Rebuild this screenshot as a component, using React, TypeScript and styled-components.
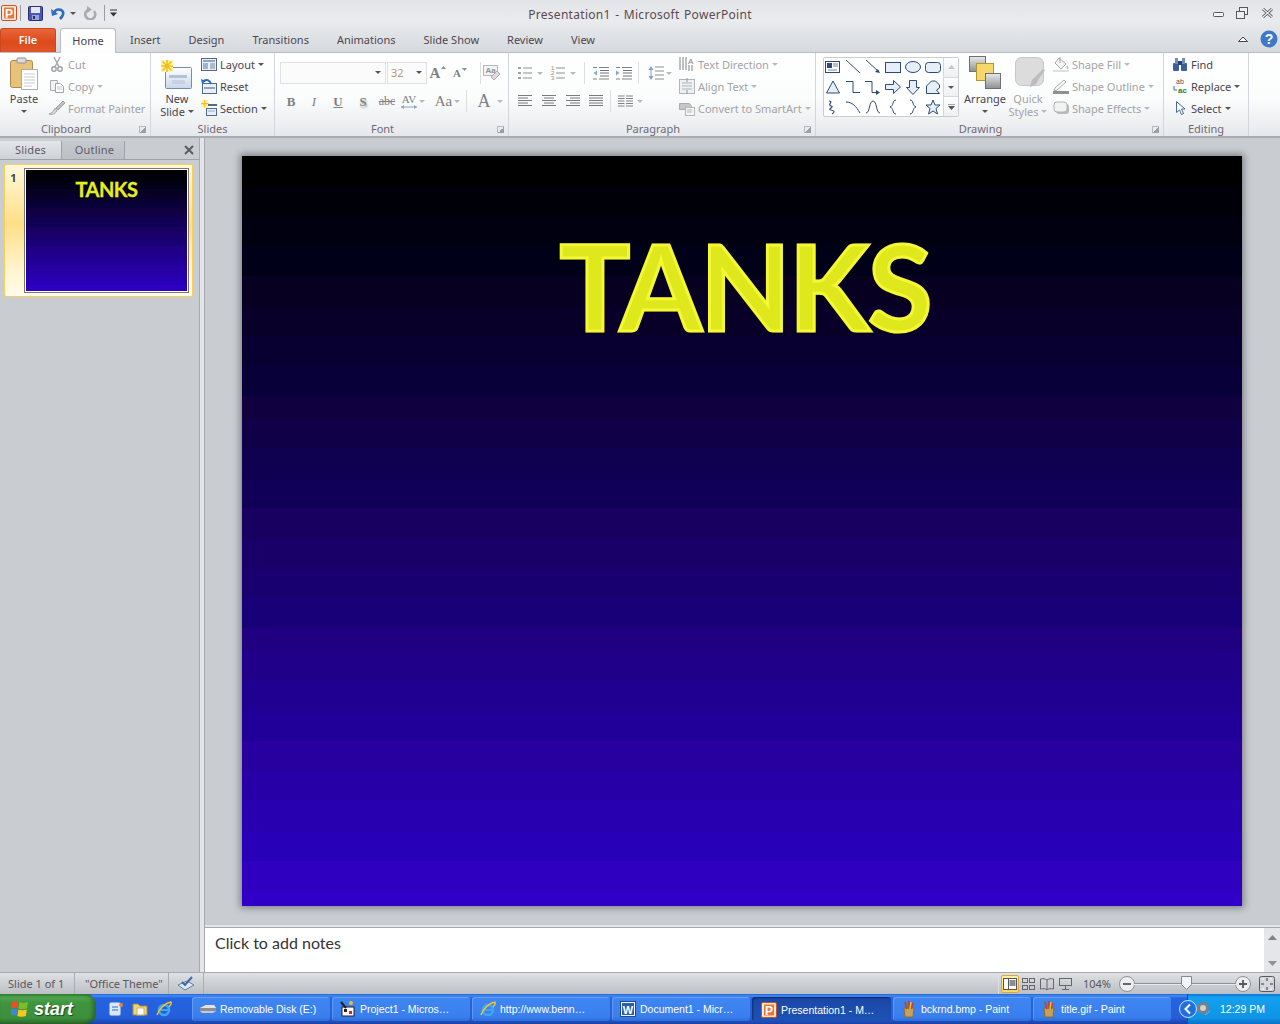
import React from "react";
import styled, { createGlobalStyle } from "styled-components";

const banded = (() => {
  const stops: string[] = [];
  const n = 100;
  for (let i = 0; i < n; i++) {
    const t = i / (n - 1);
    const r = Math.floor((51 * t) / 8) * 8;
    const b = Math.floor((204 * t) / 8) * 8;
    stops.push(`rgb(${r},0,${b}) ${i}% ${i + 1}%`);
  }
  return `linear-gradient(${stops.join(",")})`;
})();

const Global = createGlobalStyle`
  html, body { margin: 0; padding: 0; width: 1280px; height: 1024px; overflow: hidden; }
  body { font-family: "Noto Sans", "Liberation Sans", sans-serif; font-size: 11px; color: #3b3b3b; }
  svg { display: block; flex: none; }
`;

const Page = styled.div`display:flex;flex-direction:column;width:1280px;height:1024px;overflow:hidden;`;
const Chrome = styled.div`background:linear-gradient(#e2e4e8,#e9ebee 40%,#d6d9dd);`;
const TitleBar = styled.div`height:26px;display:grid;grid-template-columns:1fr auto 1fr;align-items:center;`;
const Qat = styled.div`display:flex;align-items:center;padding-left:1px;`;
const QatDivider = styled.i`width:1px;height:16px;background:#9a9da2;margin:0 ${p => p.$m ?? 7}px 0 ${p => p.$l ?? 3}px;`;
const QatGap = styled.span`width:${p => p.$w}px;flex:none;`;
const Title = styled.div`font-size:12px;color:#5b4a4f;letter-spacing:.3px;word-spacing:1px;padding-top:2px;white-space:pre;`;
const WinBtns = styled.div`display:flex;justify-content:flex-end;align-items:center;gap:10px;padding-right:5px;`;
const WinClose = styled.span`margin-left:2px;`;
const TabBar = styled.div`height:26px;display:flex;align-items:flex-end;padding-top:2px;box-sizing:border-box;`;
const FileTab = styled.div`width:56px;height:24px;padding-bottom:2px;background:linear-gradient(#e8663a,#dd4a1c 55%,#e0552a);border:1px solid #c9481e;border-bottom:0;border-radius:3px 3px 0 0;box-sizing:border-box;color:#fff;font-size:11px;font-weight:600;display:flex;align-items:center;justify-content:center;margin-right:4px;`;
const HomeTab = styled.div`width:56px;height:25px;padding-bottom:2px;background:linear-gradient(#fff,#fdfdfe);border:1px solid #b9bcc1;border-bottom:0;border-radius:3px 3px 0 0;box-sizing:border-box;display:flex;align-items:center;justify-content:center;font-size:11px;color:#4a3f4a;margin-bottom:-1px;position:relative;z-index:1;`;
const Tab = styled.div`height:24px;padding:0 14px 2px;box-sizing:border-box;display:flex;align-items:center;font-size:11px;color:#4e4650;`;
const TabEnd = styled.div`margin-left:auto;display:flex;align-items:center;gap:11px;padding:0 2px 3px 0;height:24px;box-sizing:border-box;`;

const Ribbon = styled.div`height:86px;display:flex;background:linear-gradient(#fff,#fbfcfc 55%,#e6e8ec);border-top:1px solid #b9bcc1;border-bottom:2px solid #a8abb0;box-sizing:border-box;`;
const Group = styled.div`width:${p => p.$w}px;display:flex;flex-direction:column;border-right:1px solid #d3d6da;box-sizing:border-box;flex:none;`;
const GroupBody = styled.div`height:68px;display:flex;padding:0 0 0 ${p => p.$pad ?? 0}px;box-sizing:border-box;`;
const GroupLabel = styled.div`height:16px;position:relative;display:flex;align-items:center;justify-content:center;padding-right:${p => p.$lau ? 18 : 0}px;box-sizing:border-box;font-size:11px;color:#6f6a78;`;
const Launcher = styled.span`position:absolute;right:4px;bottom:3px;width:7px;height:7px;border-left:1px solid #b5b8bc;border-top:1px solid #b5b8bc;box-sizing:border-box;background:linear-gradient(135deg,transparent 50%,#9ca0a5 50%);`;
const Big = styled.div`width:${p => p.$w ?? 42}px;margin-left:${p => p.$ml ?? 0}px;flex:none;display:flex;flex-direction:column;align-items:center;font-size:11px;line-height:13px;color:${p => p.$off ? "#a3a3a6" : "#4b4450"};`;
const BigIcon = styled.div`height:39px;display:flex;align-items:flex-start;justify-content:center;padding-top:${p => (p.$top ?? 2) + 1}px;box-sizing:border-box;`;
const Line = styled.div`height:13px;display:flex;align-items:center;gap:3px;white-space:nowrap;`;
const Caret = styled.i`display:inline-block;flex:none;width:0;height:0;border:3px solid transparent;border-top:3px solid ${p => p.$off ? "#b9b9bc" : "#55555b"};border-bottom:0;`;
const Stack = styled.div`display:flex;flex-direction:column;margin-left:${p => p.$ml ?? 0}px;flex:none;`;
const Small = styled.div`height:22px;display:flex;align-items:center;gap:3px;white-space:nowrap;font-size:11px;color:${p => p.$off ? "#a3a3a6" : "#4b4450"};`;
const Rows = styled.div`display:flex;flex-direction:column;gap:6px;padding-top:9px;width:${p => p.$w ?? 230}px;padding-left:${p => p.$pad ?? 4}px;box-sizing:border-box;flex:none;`;
const Row = styled.div`display:flex;height:22px;align-items:center;`;
const Combo = styled.div`width:${p => p.$w}px;height:22px;margin-right:${p => p.$mr ?? 0}px;border:1px solid #dfe1e4;background:#fbfbfc;box-sizing:border-box;display:flex;align-items:center;justify-content:space-between;padding:0 4px 2px 3px;color:#b59a70;font-size:11px;`;
const Tool = styled.div`width:${p => p.$w}px;margin-left:${p => p.$ml ?? 0}px;height:22px;flex:none;display:flex;align-items:center;justify-content:center;gap:${p => p.$gap ?? 4}px;`;
const Sep = styled.i`width:1px;height:22px;flex:none;background:#dcdee1;margin-left:${p => p.$ml}px;`;
const Glyph = styled.span`font-family:${p => p.$serif ? '"Liberation Serif",serif' : '"Liberation Sans",sans-serif'};font-size:${p => p.$size ?? 13}px;font-weight:${p => p.$bold ? 700 : 400};font-style:${p => p.$it ? "italic" : "normal"};text-decoration:${p => p.$under ? "underline" : p.$strike ? "line-through" : "none"};color:#808084;line-height:1;`;
const GrowMark = styled.span`display:flex;align-items:flex-start;gap:1px;`;
const AvMark = styled.span`display:flex;flex-direction:column;align-items:center;`;
const Gallery = styled.div`width:136px;height:60px;margin-top:4px;border:1px solid #c9ccd0;background:#fff;box-sizing:border-box;display:flex;border-radius:2px;`;
const ShapeGrid = styled.div`display:grid;grid-template-columns:repeat(6,20px);grid-template-rows:repeat(3,20px);width:120px;place-items:center;margin:-1px 0 0 -1px;`;
const GalleryBar = styled.div`margin-left:auto;width:14px;display:flex;flex-direction:column;border-left:1px solid #d5d7da;`;
const GalleryCell = styled.div`flex:1;display:flex;align-items:center;justify-content:center;border-bottom:1px solid #d5d7da;background:linear-gradient(#fdfdfd,#eef0f2);&:last-child{border-bottom:0;}`;

const Work = styled.div`height:834px;display:flex;background:#c9cdd2;`;
const Pane = styled.div`width:200px;padding-top:3px;box-sizing:border-box;flex:none;border-right:1px solid #a6a9ae;`;
const PaneTabs = styled.div`height:18px;display:flex;border-bottom:1px solid #9fa3a8;align-items:flex-end;position:relative;box-sizing:content-box;`;
const PaneTab = styled.div`width:${p => p.$w}px;height:18px;padding:0 0 2px ${p => p.$in ?? 0}px;display:flex;align-items:center;justify-content:center;font-size:11px;color:#5e5a68;box-sizing:border-box;background:${p => p.$on ? "linear-gradient(#e4e6e9,#ced2d6)" : "linear-gradient(#c5c9ce,#bcc0c5)"};border-right:1px solid #9fa3a8;letter-spacing:.2px;`;
const PaneClose = styled.div`position:absolute;right:5px;top:4px;`;
const Thumb = styled.div`margin:4px 6px 0 4px;height:133px;box-sizing:border-box;border:1px solid #f6cf5e;border-radius:2px;background:linear-gradient(#fff8dc,#fedf87 45%,#fff7d8 85%,#fffbe8);display:flex;padding:3px 3px 3px 0;`;
const ThumbNum = styled.div`width:19px;text-align:center;font-weight:700;font-size:11px;color:#444;padding-top:2px;padding-right:2px;box-sizing:border-box;flex:none;`;
const ThumbSlide = styled.div`flex:1;border:1px solid #777;outline:1px solid #fff;outline-offset:-2px;background:${banded};display:flex;justify-content:center;padding-top:10px;box-sizing:border-box;`;
const ThumbText = styled.div`font-family:Lato,sans-serif;font-weight:700;font-size:20px;line-height:21px;height:21px;color:#e6ee1e;letter-spacing:-.5px;-webkit-text-stroke:.3px #e6ee1e;`;
const Splitter = styled.div`width:4px;background:#e3e5e8;flex:none;border-right:1px solid #a6a9ae;`;
const Right = styled.div`flex:1;display:flex;flex-direction:column;min-width:0;`;
const Stage = styled.div`height:787px;padding:18px 0 0 37px;box-sizing:border-box;`;
const Slide = styled.div`width:1000px;height:750px;background:${banded};box-shadow:0 0 7px 2px rgba(0,0,0,.38);display:flex;justify-content:center;padding-top:55px;box-sizing:border-box;`;
const Headline = styled.div`font-family:Lato,sans-serif;font-weight:700;font-size:118px;line-height:150px;height:150px;letter-spacing:-2px;margin-left:6px;color:#dfe81c;-webkit-text-stroke:3px #f4f832;text-shadow:1px 1px 0 #aeb410,0 0 2px #fbff60;`;
const NotesRow = styled.div`height:47px;display:flex;border-top:2px solid #e3e5e8;box-sizing:border-box;`;
const Notes = styled.div`flex:1;background:#fff;border-top:1px solid #a6a9ae;padding:3px 0 0 10px;font-family:Lato,sans-serif;font-size:16px;line-height:24px;color:#333;font-weight:400;`;
const NotesBar = styled.div`width:16px;background:#e4e6e9;display:flex;flex-direction:column;align-items:center;justify-content:space-between;padding:7px 0 6px;box-sizing:border-box;border-top:1px solid #a6a9ae;`;

const Status = styled.div`height:22px;display:flex;align-items:center;background:linear-gradient(#dfe1e4,#c9ccd0 60%,#bcbfc3);border-top:1px solid #a6a9ae;box-sizing:border-box;color:#5a5560;font-size:11px;`;
const StatusCell = styled.div`height:100%;display:flex;align-items:center;padding:0 ${p => p.$pad ?? 8}px;border-right:1px solid #a9acb0;white-space:nowrap;width:${p => p.$w}px;box-sizing:border-box;`;
const StatusRight = styled.div`margin-left:auto;display:flex;align-items:center;height:100%;`;
const ViewBtn = styled.div`width:18px;height:18px;margin-left:${p => p.$ml ?? 0}px;display:flex;align-items:center;justify-content:center;box-sizing:border-box;border-radius:2px;${p => p.$on ? "background:linear-gradient(#fff0a8,#ffd65c);border:1px solid #d9a93a;" : ""}`;
const Percent = styled.div`width:44px;text-align:center;margin-left:1px;color:#5a5560;`;
const Track = styled.div`width:102px;height:1px;background:#8d9095;box-shadow:0 1px 0 #e8e9eb;position:relative;margin:0 -1px;`;
const SliderThumb = styled.div`position:absolute;left:47px;top:-7px;`;
const StatusGap = styled.span`width:${p => p.$w}px;flex:none;`;

const Taskbar = styled.div`height:30px;display:flex;align-items:center;background:linear-gradient(#1f5fd8 0,#3f8cf3 6%,#2663e0 14%,#245edb 80%,#1941a5);color:#fff;font-family:"Liberation Sans","Noto Sans",sans-serif;`;
const Start = styled.div`width:96px;height:30px;flex:none;box-sizing:border-box;background:linear-gradient(#388a3a,#4fa64f 12%,#3f943f 30%,#3c8f3c 80%,#2c6f2c);border-radius:0 10px 10px 0;box-shadow:inset -3px 0 4px rgba(0,0,0,.3);display:flex;align-items:center;gap:5px;padding-left:11px;font-style:italic;font-weight:700;font-size:18px;text-shadow:1px 1px 1px #1c4a1c;`;
const Quick = styled.div`width:96px;flex:none;display:flex;align-items:center;gap:8px;padding-left:12px;box-sizing:border-box;`;
const TaskBtn = styled.div`width:${p => p.$w ?? 138}px;height:24px;margin-right:2px;flex:none;box-sizing:border-box;border-radius:3px;display:flex;align-items:center;gap:3px;padding:${p => p.$on ? "1px 0 0 8px" : "0 0 0 7px"};font-size:10.5px;white-space:nowrap;overflow:hidden;background:${p => p.$on ? "linear-gradient(#1a47a6,#1e52b7)" : "linear-gradient(#3f86f0,#3a7ff0 80%,#2f6ddb)"};box-shadow:${p => p.$on ? "inset 1px 1px 2px rgba(0,0,0,.4)" : "inset 1px 1px 0 rgba(255,255,255,.2)"};`;
const TaskIcon = styled.span`width:18px;display:flex;justify-content:center;flex:none;`;
const Tray = styled.div`margin-left:auto;width:93px;height:30px;flex:none;box-sizing:border-box;background:linear-gradient(#0c77d8,#14a0ee 12%,#0f94e6 80%,#0b6fcb);display:flex;align-items:center;position:relative;padding-left:33px;font-size:10.5px;box-shadow:inset 1px 0 0 #0a4ca8;`;
const TrayChevron = styled.div`position:absolute;left:-8px;top:6px;`;
const TraySpeaker = styled.div`position:absolute;left:9px;top:7px;`;
const StarBox = styled.div`position:relative;`;
const StarPin = styled.div`position:absolute;left:0;top:0;`;
const ShadowGlyph = styled(Glyph)`text-shadow:1px 2px 2px #aaa;`;

type P = { w?: number; h?: number; children?: React.ReactNode };
const S = ({ w = 16, h = 16, children }: P) => <svg width={w} height={h} viewBox={`0 0 ${w} ${h}`} fill="none">{children}</svg>;

const PptIcon = ({ s = 16 }: { s?: number }) => (
  <svg width={s} height={s} viewBox="0 0 16 16">
    <rect x=".5" y=".5" width="15" height="15" rx="1.5" fill="#fbe6d8" stroke="#cf4f1e" />
    <rect x="3" y="2.5" width="10" height="11" fill="#e8763a" />
    <text x="8" y="12.500" textAnchor="middle" fontFamily="Liberation Sans" fontWeight="700" fontSize="12" fill="#fff">P</text>
  </svg>
);
const SaveIcon = () => (
  <S w={15} h={15}><rect x=".5" y=".5" width="14" height="14" rx="1" fill="#4a57b8" stroke="#29306f" /><rect x="3" y="1" width="9" height="6" fill="#e4e7f2" /><rect x="4" y="9" width="7" height="5" fill="#9aa4d4" /><rect x="5" y="10" width="2" height="3" fill="#29306f" /></S>
);
const UndoIcon = () => (
  <S w={14} h={14}><path d="M3 7C4 3 10 2 12 6c1 3-1 5-3 7" stroke="#2d6cc0" strokeWidth="2.600" /><path d="M0 3l1 7 6-2z" fill="#2d6cc0" /></S>
);
const RedoIcon = () => (
  <S w={13} h={14}><path d="M5 3.500a5 5 0 1 0 5 1.500" stroke="#a9abae" strokeWidth="2.600" /><path d="M3 0v7l5-3.500z" fill="#a9abae" /></S>
);
const Paste = () => (
  <S w={30} h={34}><rect x="1.500" y="3.500" width="22" height="27" rx="2" fill="#e9c27a" stroke="#a98a55" /><rect x="8" y="1" width="9" height="5" rx="1" fill="#d9dde2" stroke="#8d9094" /><path d="M12.500 12.500h16v20h-16z" fill="#fff" stroke="#a9acb0" /><path d="M15 17h11M15 20h11M15 23h11M15 26h11M15 29h8" stroke="#c8cbd0" /></S>
);
const Scissors = () => (
  <S><circle cx="5" cy="13" r="2.200" stroke="#9d9fa3" strokeWidth="1.400" /><circle cx="11" cy="13" r="2.200" stroke="#9d9fa3" strokeWidth="1.400" /><path d="M6 11L11 1M10 11L5 1" stroke="#a9abae" strokeWidth="1.500" /></S>
);
const Copy = () => (
  <S><path d="M1.500 2.500h7v10h-7z" fill="#f2f2f3" stroke="#aaacb0" /><path d="M6.500 5.500h5l3 3v6h-8z" fill="#fff" stroke="#a0a2a6" /><path d="M8 9h5M8 11h5" stroke="#c4c6c9" /></S>
);
const Brush = () => (
  <S><path d="M0 14c3 1 6 0 8-3L6 8C5 11 3 13 0 14z" fill="#d7d7d9" stroke="#a5a7aa" /><path d="M7 8l7-7 2 2-7 7z" fill="#bdbfc2" stroke="#a0a2a6" /></S>
);
const Star = ({ s = 12 }: { s?: number }) => (
  <svg width={s} height={s} viewBox="0 0 12 12"><rect width="12" height="12" fill="#fff3a8" /><path d="M6 0v12M0 6h12M1.500 1.500l9 9M10.500 1.500l-9 9" stroke="#f0c020" strokeWidth="1.600" /></svg>
);
const NewSlide = () => (
  <StarBox>
    <S w={32} h={30}><rect x="4.500" y="7.500" width="26" height="21" rx="1" fill="url(#ns)" stroke="#7a8ba6" /><defs><linearGradient id="ns" x1="0" y1="0" x2="0" y2="1"><stop offset="0" stopColor="#fff" /><stop offset="1" stopColor="#c9d6ea" /></linearGradient></defs><rect x="8" y="15" width="18" height="3" fill="#b4c2d8" /><path d="M11 21h13M11 23h13" stroke="#b4c2d8" /></S>
    <StarPin><Star /></StarPin>
  </StarBox>
);
const LayoutI = () => (
  <S><rect x=".5" y="2.500" width="15" height="12" fill="#eaf0f8" stroke="#51698c" /><rect x="2" y="4" width="12" height="2" fill="#8fa5c4" /><rect x="2" y="7" width="5" height="6" fill="#9fb3cf" /><path d="M9 8h5M9 10h5M9 12h5" stroke="#6f85a5" /></S>
);
const Reset = () => (
  <S><rect x="1.500" y="5.500" width="14" height="10" fill="#eaf0f8" stroke="#51698c" /><rect x="3" y="9" width="11" height="2" fill="#8fa5c4" /><path d="M10 6C9 2 5 1 3 3" stroke="#2e6cc4" strokeWidth="2" /><path d="M0 1l1 5 4-3z" fill="#2e6cc4" /></S>
);
const SectionI = () => (
  <S><g transform="scale(.62)"><rect width="12" height="12" fill="#fff3a8" /><path d="M6 0v12M0 6h12" stroke="#f0c020" strokeWidth="2" /></g><path d="M7 5h9" stroke="#51698c" strokeWidth="2" /><rect x="5.500" y="8.500" width="10" height="7" fill="#eaf0f8" stroke="#51698c" /><path d="M7 11h7" stroke="#8fa5c4" /></S>
);
const Clear = () => (
  <S w={18} h={18}><rect x=".5" y="1.500" width="14" height="10" fill="#f2f3f4" stroke="#b6b8bb" /><text x="7.500" y="9" textAnchor="middle" fontFamily="Liberation Sans" fontSize="8" fontWeight="700" fill="#909296">Aa</text><path d="M8 13l6-6 3 3-6 6z" fill="#e6d7dc" stroke="#a9a9ad" /></S>
);
const Lines = ({ a }: { a: "l" | "c" | "r" | "j" }) => {
  const rows = [14, 10, 14, 10, 14];
  return <S w={15} h={12}>{rows.map((n, i) => {
    const len = a === "j" ? 14 : n;
    const x = a === "l" || a === "j" ? 0 : a === "c" ? (14 - len) / 2 : 14 - len;
    return <path key={i} d={`M${x} ${i * 2.500 + .5}h${len}`} stroke="#777a7e" />;
  })}</S>;
};
const Bullets = () => (
  <S w={15} h={14}>{[2, 7, 12].map(y => <g key={y}><rect x="0" y={y - 1} width="3" height="2" fill="#9ea1a5" /><path d={`M5 ${y}h9`} stroke="#8c8f93" /></g>)}</S>
);
const Numbers = () => (
  <S w={15} h={14}>{[2, 7, 12].map((y, i) => <g key={y}><text x="0" y={y + 2} fontSize="6" fontFamily="Liberation Sans" fill="#9b8f6a">{i + 1}</text><path d={`M5 ${y}h9`} stroke="#8c8f93" /></g>)}</S>
);
const Indent = ({ flip }: { flip?: boolean }) => (
  <S h={14}>
    <path d="M6 1.500h10M6 13h10M0 1.500h4M0 13h4" stroke="#7f8286" />
    <path d="M7 4.500h9M7 7h9M7 10h9" stroke="#6f7276" />
    <path d={flip ? "M0 4.500v5l3.500-2.500z" : "M4 4.500v5L.5 7z"} fill="#86a8d8" />
  </S>
);
const Spacing = () => (
  <S><path d="M7 2h9M7 6h9M7 10h9M7 14h9" stroke="#8c8f93" /><path d="M3 1l2.500 4h-5zM3 15L.5 11h5z" fill="#86a0c8" /><path d="M3 4v8" stroke="#86a0c8" /></S>
);
const Columns = () => (
  <S w={15} h={12}>{[1, 3.500, 6, 8.500, 11].map(y => <path key={y} d={`M0 ${y}h6.500M8 ${y}h7`} stroke="#7f8286" />)}</S>
);
const TextDir = () => (
  <S><path d="M1 1v13M4 1v13M7 1v13" stroke="#7f8286" /><text x="9" y="8" fontSize="8" fontFamily="Liberation Sans" fill="#7f8286">A</text><path d="M13 9v6M10 9v6" stroke="#7f8286" /></S>
);
const AlignTxt = () => (
  <S><rect x=".5" y="1.500" width="15" height="14" fill="#eef0f3" stroke="#b2b5b9" /><path d="M3 5h10M3 8h10M3 11h10" stroke="#b0b3b7" /><path d="M8 0v4M8 12v4" stroke="#8d97a8" /></S>
);
const Smart = () => (
  <S><path d="M.5 3.500h10l2 3-2 3H.5z" fill="#c4c6c9" stroke="#a9abaf" /><rect x="6.500" y="7.500" width="9" height="8" fill="#f6f6f7" stroke="#b2b5b9" /><path d="M8 10h5M8 12h5" stroke="#b0b3b7" /></S>
);
const sc = "#2d4a78", sf = "#e6eef8";
const shapes: React.ReactNode[] = [
  <><rect x=".5" y="2.500" width="14" height="11" fill="#fff" stroke={sc} /><rect x="2" y="4" width="5" height="5" fill={sc} /><path d="M8 5h5M8 7h5M3 11h9" stroke="#6f85a5" /></>,
  <path d="M1 1l14 13" stroke={sc} />,
  <><path d="M1 1l12 11" stroke={sc} /><path d="M15 14l-5-1 3-3z" fill={sc} /></>,
  <rect x=".5" y="3.500" width="15" height="10" fill={sf} stroke={sc} />,
  <ellipse cx="8" cy="8" rx="7.500" ry="5.500" fill={sf} stroke={sc} />,
  <rect x=".5" y="3.500" width="15" height="10" rx="3" fill={sf} stroke={sc} />,
  <path d="M8 2l6.500 12h-13z" fill={sf} stroke={sc} />,
  <path d="M1 2.500h7v11h7" stroke={sc} />,
  <><path d="M0 2.500h7v11h5" stroke={sc} /><path d="M15 13.500l-4-2.500v5z" fill={sc} /></>,
  <path d="M.5 5.500h8v-4l7 6.500-7 6.500v-4h-8z" fill={sf} stroke={sc} />,
  <path d="M4.500 1.500h7v7h3l-6.500 7-6.500-7h3z" fill={sf} stroke={sc} />,
  <path d="M1.500 14.500V7l5-5h4l4 4v3l-3 2 3 3.500z" fill={sf} stroke={sc} />,
  <path d="M4 2c5 0-2 4 2 5s-4 3 0 4 4 2 1 4" stroke={sc} strokeWidth="1.200" />,
  <path d="M1 3c6 0 10 4 14 11" stroke={sc} />,
  <path d="M1 14c4 0 3-12 7-12s3 12 7 12" stroke={sc} />,
  <path d="M11 1C7 1 9 7 5 8c4 1 2 7 6 7" stroke={sc} />,
  <path d="M5 1c4 0 2 6 6 7-4 1-2 7-6 7" stroke={sc} />,
  <path d="M8 1l2 5h5l-4 3.500 1.500 5.500L8 12l-4.500 3L5 9.500 1 6h5z" fill={sf} stroke={sc} />,
];
const Arrange = () => (
  <S w={33} h={33}><rect x=".5" y=".5" width="16" height="15" fill="url(#ag)" stroke="#6d6f73" /><rect x="7.500" y="7.500" width="17" height="17" fill="#f5d76b" stroke="#b3962f" /><rect x="16.500" y="17.500" width="15" height="15" fill="url(#ag)" stroke="#6d6f73" /><defs><linearGradient id="ag" x1="0" y1="0" x2="0" y2="1"><stop offset="0" stopColor="#e8e9ea" /><stop offset="1" stopColor="#8d9094" /></linearGradient></defs></S>
);
const QuickStyles = () => (
  <S w={35} h={32}><rect x="4.500" y=".5" width="28" height="28" rx="6" fill="#dcdcdd" stroke="#c7c7c9" /><path d="M19 30c4-1 7-3 8-7l7-10-2-1-9 9c-3 2-3 6-4 9z" fill="#bcbcbf" /></S>
);
const Fill = () => (
  <S w={16} h={16}><path d="M6 2l7 6-5 5-6-6z" fill="#f4f4f5" stroke="#a5a7aa" /><path d="M7 1v6" stroke="#a5a7aa" /><path d="M14 9c1 2 2 3 1 4s-2 0-1-4z" fill="#b7b9bc" /><rect x="0" y="14" width="16" height="2" fill="#dfe0e2" /></S>
);
const Outline = () => (
  <S w={16} h={16}><path d="M2 10l9-8 2 2-9 8-3 1z" fill="#fff" stroke="#a5a7aa" /><rect x="0" y="13" width="16" height="3" fill="#8e9094" /></S>
);
const Effects = () => (
  <S w={16} h={16}><rect x="3" y="4" width="13" height="10" rx="3" fill="#b9bbbe" /><rect x="1" y="2" width="13" height="10" rx="3" fill="#f2f2f3" stroke="#b0b2b5" /></S>
);
const Binoculars = () => (
  <S><rect x="1" y="7" width="6" height="8" rx="1" fill="#3a5f9c" /><rect x="9" y="7" width="6" height="8" rx="1" fill="#3a5f9c" /><rect x="3" y="2" width="3" height="6" fill="#6d8dc0" /><rect x="10" y="2" width="3" height="6" fill="#6d8dc0" /><rect x="6" y="5" width="4" height="4" fill="#23406f" /></S>
);
const ReplaceI = () => (
  <S>
    <text x="4" y="6" fontSize="7" fontFamily="Liberation Sans" fill="#555">ab</text>
    <text x="6" y="15" fontSize="8" fontWeight="700" fontFamily="Liberation Sans" fill="#2f7d32">ac</text>
    <path d="M2 8v4h3" stroke="#3a6fb8" />
  </S>
);
const Cursor = () => (
  <S><path d="M4.500 1.500v11l3-2.500 2 4.500 2-1-2-4.500h3.500z" fill="#fff" stroke="#4a6a9a" /></S>
);

const Win = ({ s = 18 }: { s?: number }) => (
  <svg width={s} height={s} viewBox="0 0 17 17"><path d="M1 2c2-1 4-1 6 0L6 8C4 7 2 7 0 8z" fill="#e8502a" /><path d="M8 2c2 1 5 1 8 0l-1 6c-3 1-6 1-8 0z" fill="#7cbb2c" /><path d="M0 9c2-1 4-1 6 0l-1 6c-2-1-4-1-6 0z" fill="#3a86e0" /><path d="M7 9c2 1 5 1 8 0l-1 6c-3 1-6 1-8 0z" fill="#f6c81f" /></svg>
);
const IE = ({ s = 16 }: { s?: number }) => (
  <svg width={s} height={s} viewBox="0 0 16 16" fill="none"><circle cx="8" cy="9" r="5" stroke="#3fa5ee" strokeWidth="2.600" /><path d="M4 9h8" stroke="#3fa5ee" strokeWidth="2" /><path d="M1 14C3 8 9 2 15 1c1 2-1 4-2 5" stroke="#f2c230" strokeWidth="1.400" /></svg>
);
const Outlook = () => (
  <S><rect x="1" y="1" width="12" height="14" rx="2" fill="#dce9fa" stroke="#2a6ad0" /><path d="M4 6h6M4 9h6" stroke="#2a6ad0" /><circle cx="13" cy="4" r="2" fill="#f08030" /></S>
);
const Folder = () => (
  <S><path d="M1 3h5l2 2h7v9H1z" fill="#f2d27a" stroke="#b08a30" /><rect x="5" y="7" width="7" height="7" fill="#fff" stroke="#c8b070" /></S>
);
const Disk = () => (
  <S w={18} h={16}><path d="M1 7l6-3h8l2 3v3l-3 2H3l-2-2z" fill="#c9c9cd" /><path d="M1 7h16v3H1z" fill="#8d8d92" /><path d="M1 7l6-3h8l2 3z" fill="#e4e4e6" /></S>
);
const Vb = () => (
  <S w={18} h={18}><rect x="3" y="7" width="12" height="9" fill="#fff" stroke="#222" /><rect x="5" y="9" width="3" height="3" fill="#222" /><rect x="10" y="11" width="3" height="3" fill="#d22" /><path d="M2 2l5 6" stroke="#222" strokeWidth="2" /><circle cx="12" cy="3" r="2" fill="#f0c020" /></S>
);
const WordI = () => (
  <svg width="16" height="16" viewBox="0 0 16 16"><rect x=".5" y=".5" width="15" height="15" fill="#f2f6fc" stroke="#20498f" /><rect x="2" y="2" width="12" height="12" fill="#2b5fb3" /><text x="8" y="12.500" textAnchor="middle" fontSize="11" fontWeight="700" fontFamily="Liberation Sans" fill="#fff">W</text></svg>
);
const PaintI = () => (
  <S w={14} h={17}><path d="M2 7h10l-1 9H3z" fill="#c4a05a" stroke="#8a6d32" /><path d="M3 1l2 7M7 0v8M11 2L9 8" stroke="#d8362a" strokeWidth="1.600" /><path d="M5 2l1 6" stroke="#33a34a" strokeWidth="1.400" /><path d="M9 1L8 8" stroke="#f2c230" strokeWidth="1.400" /></S>
);

const statusView = [
  <S w={14} h={12}><rect x=".5" y=".5" width="13" height="11" fill="#fff" stroke="#555" /><path d="M5.500 1v10" stroke="#555" /><rect x="6.500" y="2" width="6" height="6" fill="#8a8d92" /></S>,
  <S w={13} h={12}><rect x=".5" y=".5" width="5" height="4" stroke="#666" /><rect x="7.500" y=".5" width="5" height="4" stroke="#666" /><rect x=".5" y="7.500" width="5" height="4" stroke="#666" /><rect x="7.500" y="7.500" width="5" height="4" stroke="#666" /></S>,
  <S w={14} h={12}><path d="M7 2C5 .5 3 .5 .5 1v10c3-.5 5-.5 6.500 1 1.500-1.500 3.500-1.500 6.500-1V1C11 .5 9 .5 7 2zM7 2v10" stroke="#666" /></S>,
  <S w={13} h={12}><rect x=".5" y=".5" width="12" height="7" stroke="#666" /><path d="M6.500 8v3M3 11.500h7" stroke="#666" /></S>,
];
const RoundBtn = ({ plus }: { plus?: boolean }) => (
  <S><circle cx="8" cy="8" r="7.500" fill="#eceef0" stroke="#8d9095" /><path d={plus ? "M4 8h8M8 4v8" : "M4 8h8"} stroke="#55585c" strokeWidth="1.800" /></S>
);

const tabs = ["Insert", "Design", "Transitions", "Animations", "Slide Show", "Review", "View"];
const task: { t: string; i: React.ReactNode; on?: boolean; w?: number }[] = [
  { t: "Removable Disk (E:)", i: <Disk /> },
  { t: "Project1 - Micros…", i: <Vb /> },
  { t: "http://www.benn…", i: <IE /> },
  { t: "Document1 - Micr…", i: <WordI /> },
  { t: "Presentation1 - M…", i: <PptIcon />, on: true, w: 139 },
  { t: "bckrnd.bmp - Paint", i: <PaintI /> },
  { t: "title.gif - Paint", i: <PaintI /> },
];

const Label = ({ t, launcher }: { t: string; launcher?: boolean }) => (
  <GroupLabel $lau={launcher}>{t}{launcher && <Launcher />}</GroupLabel>
);

export default function App() {
  return (
    <Page>
      <Global />
      <Chrome>
        <TitleBar>
          <Qat>
            <PptIcon />
            <QatDivider $l={3} $m={7} />
            <SaveIcon />
            <QatGap $w={8} />
            <UndoIcon />
            <QatGap $w={5} /><Caret /><QatGap $w={8} />
            <RedoIcon />
            <QatDivider $l={7} $m={5} />
            <S w={8} h={8}><path d="M0 1h7" stroke="#333" /><path d="M0 3.500h7L3.500 7.500z" fill="#333" /></S>
          </Qat>
          <Title>Presentation1 - Microsoft PowerPoint</Title>
          <WinBtns>
            <S w={13} h={12}><rect x="1.500" y="5.500" width="10" height="4" rx="1" fill="#f4f5f6" stroke="#55585c" /></S>
            <S w={14} h={12}><rect x="4.500" y=".5" width="8" height="7" fill="#eee" stroke="#55585c" /><rect x="1.500" y="4.500" width="8" height="7" fill="#eee" stroke="#55585c" /></S>
            <WinClose><S w={14} h={12}><path d="M2 2l9 8M11 2l-9 8" stroke="#55585c" strokeWidth="3" /><path d="M2 2l9 8M11 2l-9 8" stroke="#eee" strokeWidth="1.200" /></S></WinClose>
          </WinBtns>
        </TitleBar>
        <TabBar>
          <FileTab>File</FileTab>
          <HomeTab>Home</HomeTab>
          {tabs.map(t => <Tab key={t}>{t}</Tab>)}
          <TabEnd>
            <S w={12} h={8}><path d="M1.500 6.500L6 2l4.500 4.500z" fill="#fff" stroke="#444" /></S>
            <svg width="18" height="18" viewBox="0 0 18 18"><circle cx="9" cy="9" r="8.500" fill="#3f78c8" /><text x="9" y="14" textAnchor="middle" fontSize="14" fontWeight="700" fontFamily="Liberation Sans" fill="#fff">?</text></svg>
          </TabEnd>
        </TabBar>
      </Chrome>
      <Ribbon>
        <Group $w={151}>
          <GroupBody $pad={4}>
            <Big $w={40}><BigIcon $top={3}><Paste /></BigIcon><Line>Paste</Line><Line><Caret /></Line></Big>
            <Stack $ml={5}>
              <Small $off><Scissors />Cut</Small>
              <Small $off><Copy />Copy <Caret $off /></Small>
              <Small $off><Brush />Format Painter</Small>
            </Stack>
          </GroupBody>
          <Label t="Clipboard" launcher />
        </Group>
        <Group $w={124}>
          <GroupBody $pad={5}>
            <Big $w={42}><BigIcon $top={6}><NewSlide /></BigIcon><Line>New</Line><Line>Slide <Caret /></Line></Big>
            <Stack $ml={3}>
              <Small><LayoutI />Layout <Caret /></Small>
              <Small><Reset />Reset</Small>
              <Small><SectionI />Section <Caret /></Small>
            </Stack>
          </GroupBody>
          <Label t="Slides" />
        </Group>
        <Group $w={234}>
          <GroupBody>
            <Rows $pad={5}>
              <Row>
                <Combo $w={106} $mr={1}><span /><Caret /></Combo>
                <Combo $w={40}>32<Caret /></Combo>
                <Tool $w={22}><GrowMark><Glyph $serif $size={15} $bold>A</Glyph><S w={5} h={4}><path d="M0 3l2.500-3L5 3z" fill="#8d8d90" /></S></GrowMark></Tool>
                <Tool $w={22}><GrowMark><Glyph $serif $size={11} $bold>A</Glyph><S w={5} h={4}><path d="M0 0l2.500 3L5 0z" fill="#8d8d90" /></S></GrowMark></Tool>
                <Sep $ml={9} />
                <Tool $w={22}><Clear /></Tool>
              </Row>
              <Row>
                <Tool $w={22}><Glyph $serif $bold>B</Glyph></Tool>
                <Tool $w={24}><Glyph $serif $it>I</Glyph></Tool>
                <Tool $w={24}><Glyph $serif $bold $under>U</Glyph></Tool>
                <Tool $w={26}><ShadowGlyph $serif $bold>S</ShadowGlyph></Tool>
                <Tool $w={22}><Glyph $serif $size={12} $strike>abc</Glyph></Tool>
                <Tool $w={30} $gap={2}>
                  <AvMark><Glyph $serif $size={11}>AV</Glyph><S w={16} h={4}><path d="M0 2h16" stroke="#8fa3c4" /><path d="M0 2l3-2v4zM16 2l-3-2v4z" fill="#8fa3c4" /></S></AvMark>
                  <Caret $off />
                </Tool>
                <Tool $w={31} $ml={4} $gap={2}><Glyph $serif $size={15}>Aa</Glyph><Caret $off /></Tool>
                <Sep $ml={3} />
                <Tool $w={34} $ml={6} $gap={6}><Glyph $serif $size={18}>A</Glyph><Caret $off /></Tool>
              </Row>
            </Rows>
          </GroupBody>
          <Label t="Font" launcher />
        </Group>
        <Group $w={307}>
          <GroupBody>
            <Rows $w={170} $pad={5}>
              <Row>
                <Tool $w={32}><Bullets /><Caret $off /></Tool>
                <Tool $w={32} $ml={1}><Numbers /><Caret $off /></Tool>
                <Sep $ml={5} />
                <Tool $w={22} $ml={5}><Indent /></Tool>
                <Tool $w={22} $ml={1}><Indent flip /></Tool>
                <Sep $ml={3} />
                <Tool $w={32} $ml={5} $gap={2}><Spacing /><Caret $off /></Tool>
              </Row>
              <Row>
                <Tool $w={20} $ml={1}><Lines a="l" /></Tool>
                <Tool $w={28}><Lines a="c" /></Tool>
                <Tool $w={20}><Lines a="r" /></Tool>
                <Tool $w={26}><Lines a="j" /></Tool>
                <Sep $ml={1} />
                <Tool $w={32} $ml={3}><Columns /><Caret $off /></Tool>
              </Row>
            </Rows>
            <Stack>
              <Small $off><TextDir />Text Direction <Caret $off /></Small>
              <Small $off><AlignTxt />Align Text <Caret $off /></Small>
              <Small $off><Smart />Convert to SmartArt <Caret $off /></Small>
            </Stack>
          </GroupBody>
          <Label t="Paragraph" launcher />
        </Group>
        <Group $w={348}>
          <GroupBody $pad={7}>
            <Gallery>
              <ShapeGrid>{shapes.map((s, i) => <S key={i}>{s}</S>)}</ShapeGrid>
              <GalleryBar>
                <GalleryCell><S w={7} h={4}><path d="M0 4l3.500-4L7 4z" fill="#c4c6c9" /></S></GalleryCell>
                <GalleryCell><Caret /></GalleryCell>
                <GalleryCell><S w={7} h={6}><path d="M0 0h7" stroke="#555" /><path d="M0 2h7L3.500 6z" fill="#555" /></S></GalleryCell>
              </GalleryBar>
            </Gallery>
            <Big $w={42} $ml={5}><BigIcon $top={2}><Arrange /></BigIcon><Line>Arrange</Line><Line><Caret /></Line></Big>
            <Big $w={42} $ml={1} $off><BigIcon $top={3}><QuickStyles /></BigIcon><Line>Quick</Line><Line>Styles <Caret $off /></Line></Big>
            <Stack $ml={4}>
              <Small $off><Fill />Shape Fill <Caret $off /></Small>
              <Small $off><Outline />Shape Outline <Caret $off /></Small>
              <Small $off><Effects />Shape Effects <Caret $off /></Small>
            </Stack>
          </GroupBody>
          <Label t="Drawing" launcher />
        </Group>
        <Group $w={85}>
          <GroupBody $pad={8}>
            <Stack>
              <Small><Binoculars />Find</Small>
              <Small><ReplaceI />Replace <Caret /></Small>
              <Small><Cursor />Select <Caret /></Small>
            </Stack>
          </GroupBody>
          <Label t="Editing" />
        </Group>
      </Ribbon>
      <Work>
        <Pane>
          <PaneTabs>
            <PaneTab $w={62} $on>Slides</PaneTab>
            <PaneTab $w={63} $in={3}>Outline</PaneTab>
            <PaneClose><S w={10} h={10}><path d="M1 1l8 8M9 1l-8 8" stroke="#5a5d62" strokeWidth="2" /></S></PaneClose>
          </PaneTabs>
          <Thumb>
            <ThumbNum>1</ThumbNum>
            <ThumbSlide><ThumbText>TANKS</ThumbText></ThumbSlide>
          </Thumb>
        </Pane>
        <Splitter />
        <Right>
          <Stage>
            <Slide><Headline>TANKS</Headline></Slide>
          </Stage>
          <NotesRow>
            <Notes>Click to add notes</Notes>
            <NotesBar>
              <S w={9} h={5}><path d="M0 5l4.500-5L9 5z" fill="#7f8286" /></S>
              <S w={9} h={5}><path d="M0 0l4.500 5L9 0z" fill="#8f9296" /></S>
            </NotesBar>
          </NotesRow>
        </Right>
      </Work>
      <Status>
        <StatusCell $w={75}>Slide 1 of 1</StatusCell>
        <StatusCell $w={94} $pad={10}>"Office Theme"</StatusCell>
        <StatusCell $w={35} $pad={8}>
          <S w={18} h={16}><path d="M1 9l7 5 9-5-7-4z" fill="#dfe9f6" stroke="#5e7fa8" /><path d="M5 6l3 3 7-8" stroke="#3f6aa8" strokeWidth="2" /></S>
        </StatusCell>
        <StatusRight>
          <Sep $ml={0} />
          <ViewBtn $on $ml={2}>{statusView[0]}</ViewBtn>
          <ViewBtn>{statusView[1]}</ViewBtn>
          <ViewBtn $ml={1}>{statusView[2]}</ViewBtn>
          <ViewBtn>{statusView[3]}</ViewBtn>
          <Percent>104%</Percent>
          <RoundBtn />
          <Track><SliderThumb><S w={11} h={14}><path d="M.5.5h10v8L5.500 13.500.5 8.500z" fill="#f4f5f6" stroke="#85888c" /></S></SliderThumb></Track>
          <RoundBtn plus />
          <StatusGap $w={8} />
          <S><rect x=".5" y=".5" width="15" height="15" rx="2" fill="#d5d7da" stroke="#55585c" /><path d="M8 2v3M8 11v3M2 8h3M11 8h3" stroke="#333" /><path d="M3 3h2M3 13h2M11 3h2M11 13h2" stroke="#fff" /></S>
          <StatusGap $w={5} />
        </StatusRight>
      </Status>
      <Taskbar>
        <Start><Win />start</Start>
        <Quick><Outlook /><Folder /><IE /></Quick>
        {task.map(b => <TaskBtn key={b.t} $on={b.on} $w={b.w}><TaskIcon>{b.i}</TaskIcon><span>{b.t}</span></TaskBtn>)}
        <Tray>
          <TrayChevron><svg width="18" height="18" viewBox="0 0 18 18" fill="none"><circle cx="9" cy="9" r="8.500" fill="#1f6fe0" stroke="#cfe4fb" /><path d="M11 4.500L6.500 9l4.500 4.500" stroke="#fff" strokeWidth="2" /></svg></TrayChevron>
          <TraySpeaker><S><circle cx="7" cy="7" r="6" fill="#7c7f84" /><circle cx="7" cy="7" r="3" fill="#cfd2d6" /><path d="M9 14l5-4" stroke="#7db4ef" /></S></TraySpeaker>
          12:29 PM
        </Tray>
      </Taskbar>
    </Page>
  );
}
